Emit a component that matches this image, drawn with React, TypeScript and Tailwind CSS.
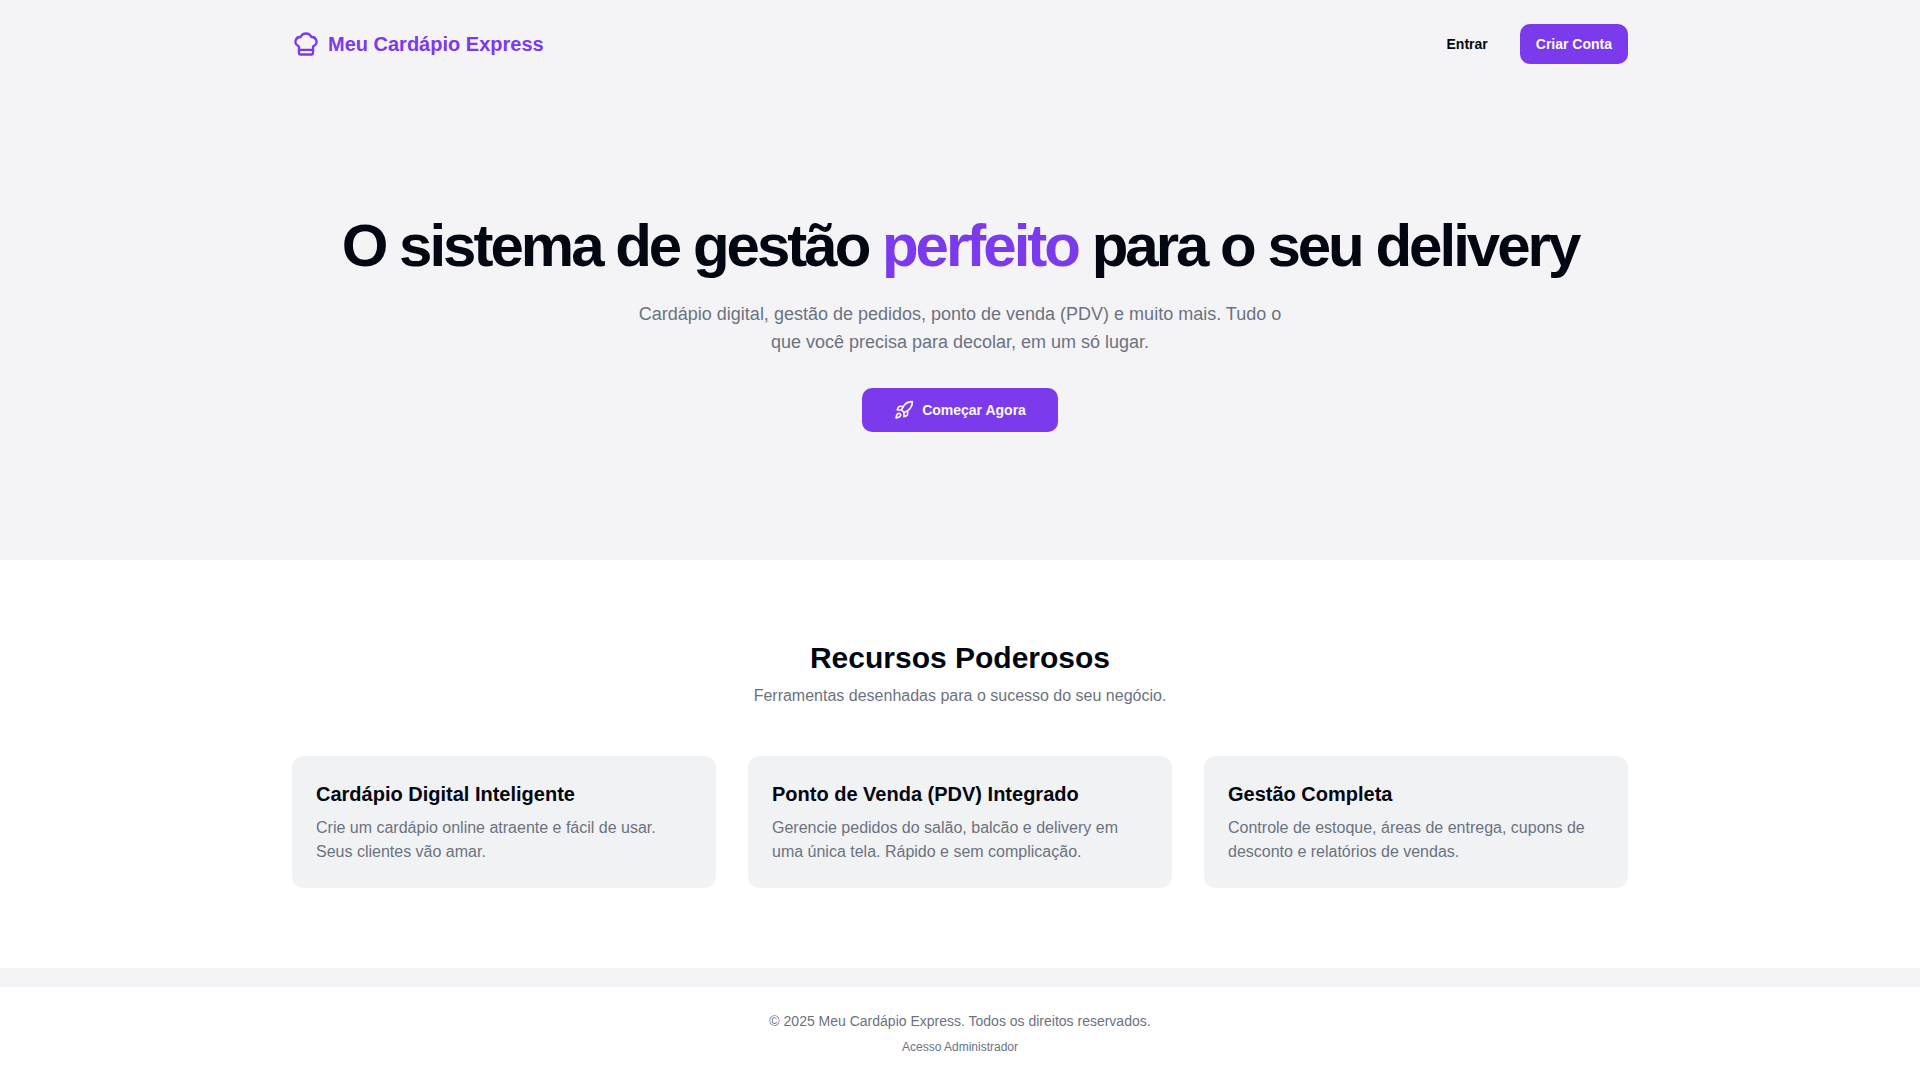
import { ChefHat, Rocket } from "lucide-react";

const FEATURES = [
  {
    title: "Cardápio Digital Inteligente",
    text: "Crie um cardápio online atraente e fácil de usar. Seus clientes vão amar.",
  },
  {
    title: "Ponto de Venda (PDV) Integrado",
    text: "Gerencie pedidos do salão, balcão e delivery em uma única tela. Rápido e sem complicação.",
  },
  {
    title: "Gestão Completa",
    text: "Controle de estoque, áreas de entrega, cupons de desconto e relatórios de vendas.",
  },
];

const Header = () => (
  <header className="mx-auto flex w-full max-w-[1400px] items-center justify-between px-8 py-6">
    <a href="#" className="flex items-center gap-2 text-xl font-bold text-[#7c3aed]">
      <ChefHat size={28} />
      <span>Meu Cardápio Express</span>
    </a>
    <nav className="flex items-center gap-4">
      <a
        href="#entrar"
        className="flex h-10 items-center rounded-[10px] px-4 text-sm font-semibold"
      >
        Entrar
      </a>
      <a
        href="#criar-conta"
        className="flex h-10 items-center rounded-[10px] bg-[#7c3aed] px-4 text-sm font-semibold text-gray-50"
      >
        Criar Conta
      </a>
    </nav>
  </header>
);

const Hero = () => (
  <section className="px-8 py-32 text-center">
    <h1 className="text-6xl font-extrabold tracking-tighter">
      O sistema de gestão <span className="text-[#7c3aed]">perfeito</span> para o seu delivery
    </h1>
    <p className="mx-auto mt-6 max-w-2xl text-lg text-[#6b7280]">
      Cardápio digital, gestão de pedidos, ponto de venda (PDV) e muito mais. Tudo o que você
      precisa para decolar, em um só lugar.
    </p>
    <a
      href="#comecar"
      className="mt-8 inline-flex h-11 items-center gap-2 rounded-[10px] bg-[#7c3aed] px-8 text-sm font-semibold text-gray-50"
    >
      <Rocket size={20} />
      Começar Agora
    </a>
  </section>
);

const Features = () => (
  <section className="bg-white py-20">
    <div className="mx-auto max-w-[1400px] px-8">
      <div className="mb-12 text-center">
        <h2 className="text-3xl font-bold">Recursos Poderosos</h2>
        <p className="mt-2 text-[#6b7280]">Ferramentas desenhadas para o sucesso do seu negócio.</p>
      </div>
      <div className="grid gap-8 md:grid-cols-3">
        {FEATURES.map((feature) => (
          <div key={feature.title} className="rounded-xl bg-[#f1f2f4] p-6">
            <h3 className="mb-2 text-xl font-bold">{feature.title}</h3>
            <p className="text-[#6b7280]">{feature.text}</p>
          </div>
        ))}
      </div>
    </div>
  </section>
);

const Footer = () => (
  <footer className="flex flex-col items-center gap-2 border-b border-white bg-white px-8 py-6 text-center text-[#6b7280]">
    <p className="text-sm">© 2025 Meu Cardápio Express. Todos os direitos reservados.</p>
    <a href="#admin" className="text-xs">
      Acesso Administrador
    </a>
  </footer>
);

const App = () => (
  <div className="flex min-h-screen flex-col bg-[#f4f4f7] font-['Liberation_Sans',Arial,sans-serif] text-[#030712]">
    <Header />
    <main className="grow">
      <Hero />
      <Features />
    </main>
    <Footer />
  </div>
);

export default App;
